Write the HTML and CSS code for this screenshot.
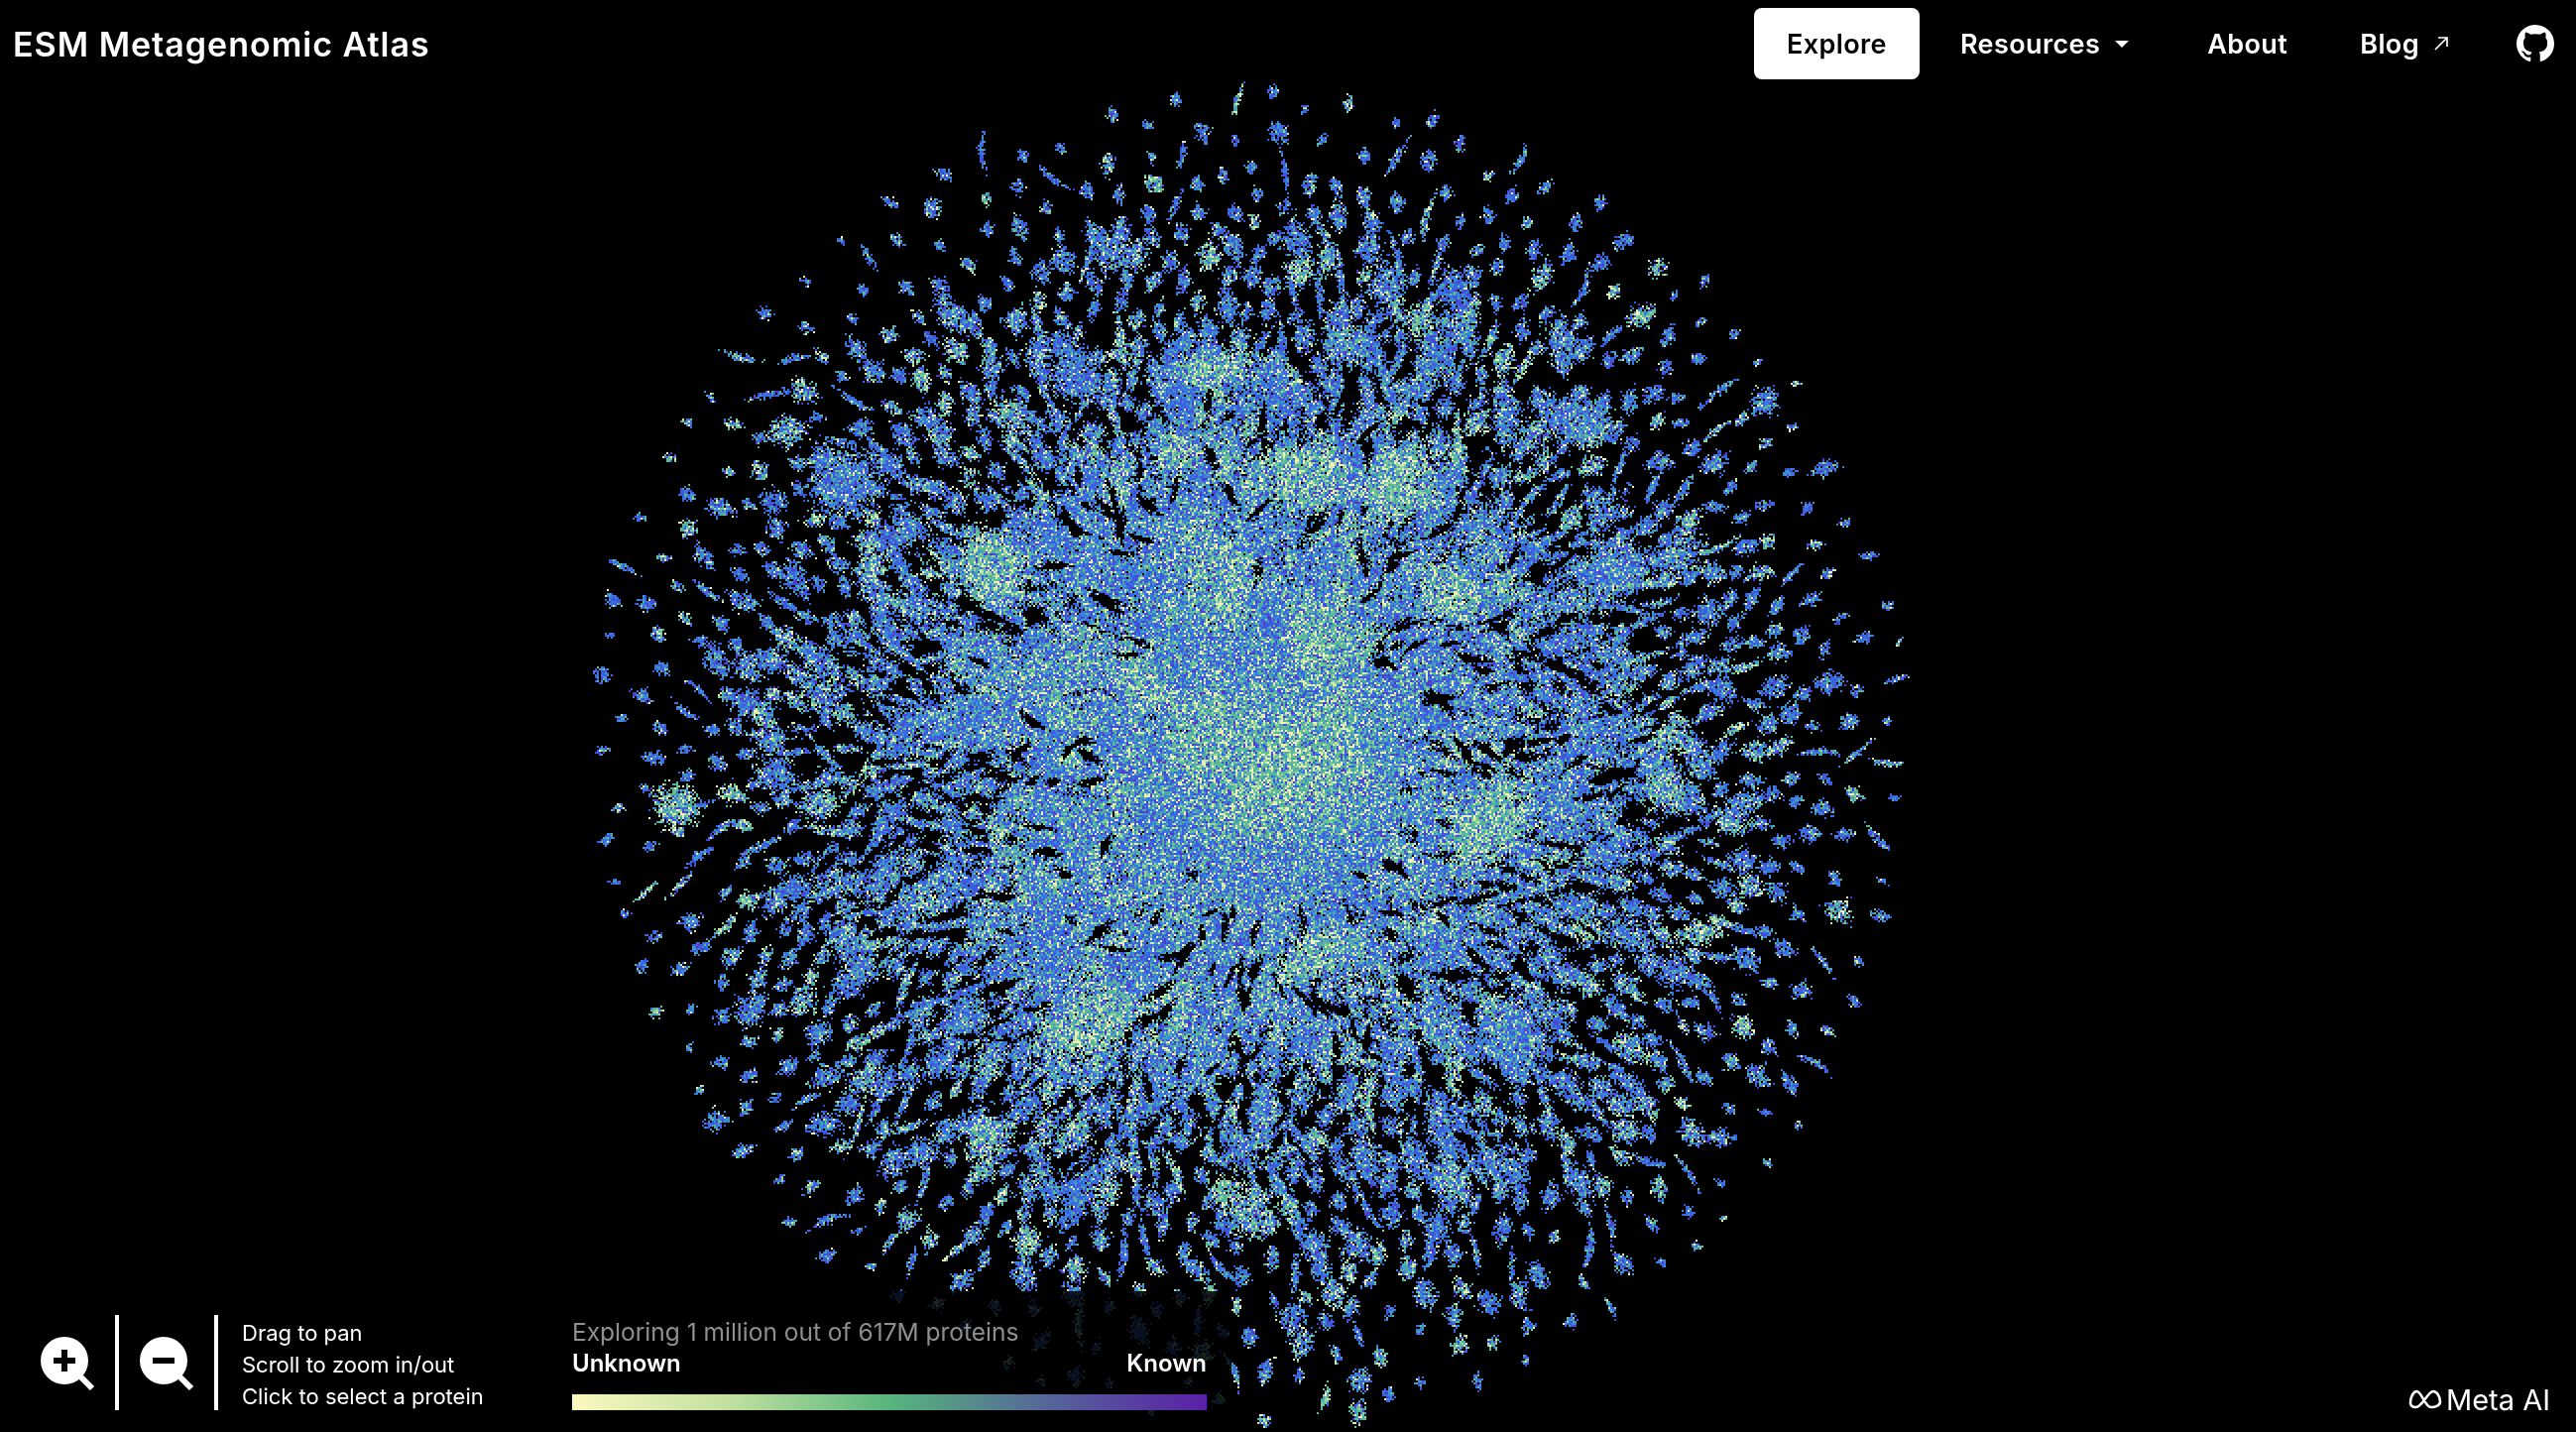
FILE: index.html
```html
<!DOCTYPE html>
<html lang="en">
<head>
    <meta charset="UTF-8">
    <meta name="viewport" content="width=device-width, initial-scale=1.0">
    <title>ESM Metagenomic Atlas</title>
    <link rel="stylesheet" href="styles.css">
</head>
<body>
    <canvas id="atlas" width="1299" height="722"></canvas>
    <div class="page">
        <header class="topbar">
            <div class="brand">ESM Metagenomic Atlas</div>
            <nav class="nav">
                <a class="nav-item explore">Explore</a>
                <a class="nav-item resources">Resources <span class="caret"></span></a>
                <a class="nav-item about">About</a>
                <a class="nav-item blog">Blog
                    <svg class="blog-arrow" viewBox="0 0 16 16" width="16" height="16">
                        <path d="M2 14 L14 2 M5 2 H14 V11" fill="none" stroke="#fff" stroke-width="1.7"/>
                    </svg>
                </a>
                <svg class="github" viewBox="0 0 16 16" width="38" height="38">
                    <path fill="#fff" d="M8 0C3.58 0 0 3.58 0 8c0 3.54 2.29 6.53 5.47 7.59.4.07.55-.17.55-.38 0-.19-.01-.82-.01-1.49-2.01.37-2.53-.49-2.69-.94-.09-.23-.48-.94-.82-1.13-.28-.15-.68-.52-.01-.53.63-.01 1.08.58 1.23.82.72 1.21 1.87.87 2.33.66.07-.52.28-.87.51-1.07-1.78-.2-3.64-.89-3.64-3.95 0-.87.31-1.59.82-2.15-.08-.2-.36-1.02.08-2.12 0 0 .67-.21 2.2.82.64-.18 1.32-.27 2-.27s1.36.09 2 .27c1.53-1.04 2.2-.82 2.2-.82.44 1.1.16 1.92.08 2.12.51.56.82 1.27.82 2.15 0 3.07-1.87 3.75-3.65 3.95.29.25.54.73.54 1.48 0 1.07-.01 1.93-.01 2.2 0 .21.15.46.55.38A8.01 8.01 0 0 0 16 8c0-4.42-3.58-8-8-8z"/>
                </svg>
            </nav>
        </header>

        <footer class="bottombar">
            <div class="zoom-tools">
                <svg class="zoom-icon" viewBox="0 0 64 64" width="64" height="64">
                    <circle cx="26" cy="26" r="24" fill="#fff"/>
                    <path d="M40 40 L54 54" stroke="#fff" stroke-width="6"/>
                    <path d="M15 26 H37 M26 15 V37" stroke="#000" stroke-width="6"/>
                </svg>
                <div class="divider"></div>
                <svg class="zoom-icon" viewBox="0 0 64 64" width="64" height="64">
                    <circle cx="26" cy="26" r="24" fill="#fff"/>
                    <path d="M40 40 L54 54" stroke="#fff" stroke-width="6"/>
                    <path d="M15 26 H37" stroke="#000" stroke-width="6"/>
                </svg>
                <div class="divider"></div>
            </div>
            <div class="hints">
                <div>Drag to pan</div>
                <div>Scroll to zoom in/out</div>
                <div>Click to select a protein</div>
            </div>
            <div class="legend">
                <div class="legend-title">Exploring 1 million out of 617M proteins</div>
                <div class="legend-labels"><span>Unknown</span><span>Known</span></div>
                <div class="legend-bar"></div>
            </div>
            <div class="meta-logo">
                <svg viewBox="0 0 34 20" width="34" height="20">
                    <path d="M2 13.5C2 8 5 2 8.5 2c4.5 0 8.5 16 14 16 5 0 9.500-2 9.500-5.500C32 7 28.500 2 25 2 19.500 2 14 18 7.500 18 4 18 2 16.500 2 13.500z" fill="none" stroke="#fff" stroke-width="2.600"/>
                </svg>
                <span>Meta AI</span>
            </div>
        </footer>
    </div>
    <script src="atlas.js"></script>
</body>
</html>
```

FILE: styles.css
```css
html, body {
    margin: 0;
    height: 100%;
    background-color: #000;
}

body {
    font-family: Inter, "Open Sans", sans-serif;
    color: #fff;
    overflow: hidden;
}

#atlas {
    position: absolute;
    left: 0;
    top: 0;
    width: 2598px;
    height: 1444px;
    image-rendering: pixelated;
}

.page {
    position: relative;
    height: 1444px;
    display: flex;
    flex-direction: column;
    justify-content: space-between;
}

.topbar {
    display: flex;
    justify-content: space-between;
    align-items: center;
    padding: 8px 22px 0 13px;
}

.brand {
    font-size: 34px;
    font-weight: 600;
    letter-spacing: 1px;
}

.nav {
    display: flex;
    align-items: center;
}

.nav-item {
    font-size: 27px;
    font-weight: 600;
    letter-spacing: 0.4px;
    display: flex;
    align-items: center;
}

.explore {
    width: 167px;
    height: 72px;
    justify-content: center;
    background-color: #fff;
    color: #000;
    border-radius: 8px;
    margin-right: 41px;
}

.caret {
    width: 0;
    height: 0;
    margin-left: 15px;
    border-left: 7px solid transparent;
    border-right: 7px solid transparent;
    border-top: 7px solid #fff;
}

.resources {
    margin-right: 79px;
}

.about {
    margin-right: 73px;
}

.blog {
    margin-right: 68px;
}

.blog-arrow {
    margin-left: 14px;
}

.bottombar {
    display: flex;
    align-items: flex-end;
    padding: 0 26px 22px 39px;
    position: relative;
}

.zoom-tools {
    display: flex;
    align-items: center;
    height: 96px;
}

.zoom-icon {
    margin: 8px 13px 0 19px;
}

.zoom-icon:first-child {
    margin-left: 0;
}

.divider {
    width: 4px;
    height: 96px;
    background-color: #fff;
}

.hints {
    margin: 0 0 -2px 24px;
    font-size: 22px;
    line-height: 32px;
    width: 333px;
}

.legend {
    width: 640px;
    position: relative;
}

/* dark panel that dims the points behind the legend */
.legend::before {
    content: "";
    position: absolute;
    left: -25px;
    right: -25px;
    top: -25px;
    bottom: -22px;
    background-color: rgba(0, 0, 0, 0.85);
}

.legend-title, .legend-labels, .legend-bar {
    position: relative;
}

.legend-title {
    font-size: 24.5px;
    line-height: 32px;
    color: #8f8f8f;
}

.legend-labels {
    display: flex;
    justify-content: space-between;
    font-size: 24px;
    font-weight: 600;
    line-height: 32px;
}

.legend-bar {
    height: 16px;
    margin-top: 15px;
    background: linear-gradient(to right, #fbf8c0, #c0e0a0 25%, #57b57d 50%, #55659a 75%, #5a1fa8);
}

.meta-logo {
    margin: 0 0 -3px auto;
    display: flex;
    align-items: center;
    gap: 4px;
    font-size: 29px;
    font-weight: 400;
    height: 28px;
}
```

FILE: atlas.js
```js
// point cloud of the atlas, seeded so every load looks the same
var canvas = document.getElementById('atlas');
var ctx = canvas.getContext('2d');
var W = canvas.width, H = canvas.height;
var CX = 631, CY = 381, R = 332;

var seed = 20221;
function rnd() {
    seed = (seed + 0x6D2B79F5) | 0;
    var t = Math.imul(seed ^ (seed >>> 15), 1 | seed);
    t = (t + Math.imul(t ^ (t >>> 7), 61 | t)) ^ t;
    return ((t ^ (t >>> 14)) >>> 0) / 4294967296;
}
function gauss() {
    return (rnd() + rnd() + rnd() + rnd() - 2) * 1.2;
}

var img = ctx.createImageData(W, H);
for (var i = 3; i < img.data.length; i += 4) img.data[i] = 255;

var BLUES = [[52, 92, 222], [60, 108, 226], [58, 128, 216], [66, 148, 204], [70, 84, 214]];
var TEALS = [[78, 168, 170], [90, 182, 150], [104, 192, 150]];
var LIGHTS = [[150, 210, 160], [214, 234, 176], [240, 244, 190]];
var PURPLE = [[78, 58, 196]];

function pick(list) {
    return list[Math.floor(rnd() * list.length)];
}

// k is how known a cluster is: 0 all blue, 1 mostly pale
function pointColor(k) {
    var v = rnd();
    if (v < 0.04 + 0.3 * k) return pick(LIGHTS);
    if (v < 0.12 + 0.64 * k) return pick(TEALS);
    if (v < 0.94) return pick(BLUES);
    return PURPLE[0];
}

function plot(x, y, c) {
    x = Math.round(x); y = Math.round(y);
    if (x < 0 || y < 0 || x >= W || y >= H) return;
    var o = (y * W + x) * 4;
    img.data[o] = c[0]; img.data[o + 1] = c[1]; img.data[o + 2] = c[2];
}

function blob(x, y, a, len, wid, k, n, color) {
    var ca = Math.cos(a), sa = Math.sin(a);
    var bend = (rnd() - 0.5) * 0.25 / Math.max(len, 1);
    for (var i = 0; i < n; i++) {
        var u = gauss() * len, v = gauss() * wid * (1 - Math.min(0.7, Math.abs(u) / (len * 3)));
        v += bend * u * u;
        plot(x + u * ca - v * sa, y + u * sa + v * ca, color || pointColor(k));
    }
}

function flow(x, y) {
    var base = Math.atan2(y - CY, x - CX);
    return base + 0.45 * Math.sin(x * 0.017 + 1.3) * Math.cos(y * 0.021 - 0.7);
}

// scattered flakes, small near the rim and large toward the middle
var placed = [];
var tries = 0;
while (placed.length < 3600 && tries < 80000) {
    tries++;
    var f = Math.pow(rnd(), 0.52);
    var th = rnd() * Math.PI * 2;
    var x = CX + Math.cos(th) * f * R, y = CY + Math.sin(th) * f * R * 1.01;
    var gap = f > 0.82 ? 7 + 30 * (f - 0.82) + 5 : 5 + 8 * f;
    var ok = true;
    for (var j = 0; j < placed.length; j++) {
        var ddx = placed[j][0] - x, ddy = placed[j][1] - y;
        if (ddx * ddx + ddy * ddy < gap * gap) { ok = false; break; }
    }
    if (!ok) continue;
    placed.push([x, y]);
    var inner = 1 - f;
    var len, wid;
    if (rnd() < 0.14) {
        // long thin streak
        len = 4 + rnd() * 3.5 + 6 * inner;
        wid = 1 + rnd() * 0.5 + 1.4 * inner;
    } else {
        len = (1.9 + 5.5 * Math.pow(inner, 0.7)) * (0.75 + rnd() * rnd() * 1.5);
        wid = len * (0.6 + rnd() * 0.4);
    }
    var kk = rnd() < 0.2 ? 0.55 + rnd() * 0.45 : rnd() * 0.3 + 0.3 * inner;
    var n = Math.round(len * wid * 9) + 6;
    blob(x, y, flow(x, y) + (rnd() - 0.5) * 1.2, len, wid, kk, n);
}

// black slits keep the mid ring from closing up
for (var s = 0; s < 340; s++) {
    var sf = 0.24 + rnd() * 0.46, st = rnd() * Math.PI * 2;
    var sx = CX + Math.cos(st) * sf * R, sy = CY + Math.sin(st) * sf * R;
    var sl = 2.5 + rnd() * 4, sw = 0.9 + rnd() * 1.1;
    blob(sx, sy, flow(sx, sy) + (rnd() - 0.5) * 1.6, sl, sw, 0, Math.round(sl * sw * 12), [0, 0, 0]);
}

// the middle is nearly solid, thinning out with no hard edge
for (var m = 0; m < 130; m++) {
    var mf = Math.pow(rnd(), 0.75) * 0.22, mt = rnd() * Math.PI * 2;
    var mx = CX + 18 + Math.cos(mt) * mf * R * 1.05, my = CY + 4 + Math.sin(mt) * mf * R * 0.85;
    blob(mx, my, rnd() * Math.PI, 8, 6, 0.42 + (0.22 - mf) * 2, 220);
}

// the big clusters that stand out, placed by hand [x, y, radius along, radius across, known]
var big = [
    [650, 388, 28, 22, 1], [668, 325, 14, 12, 1], [606, 370, 16, 14, 1],
    [501, 286, 13, 14, 1], [612, 288, 19, 15, 0.85], [654, 240, 11, 19, 1], [705, 244, 15, 14, 1],
    [731, 298, 11, 11, 1], [750, 415, 12, 21, 1], [547, 516, 18, 14, 1], [663, 480, 15, 10, 0.9],
    [538, 336, 19, 13, 0.6], [424, 242, 12, 13, 0.3], [612, 186, 13, 8, 0.85], [592, 227, 8, 7, 1],
    [530, 476, 21, 10, 0.3], [792, 211, 12, 10, 0.3], [816, 283, 9, 10, 0.4], [763, 523, 14, 12, 0.3],
    [733, 596, 8, 7, 0.6], [497, 572, 8, 8, 0.9], [838, 398, 8, 8, 0.7], [340, 406, 7, 9, 0.9]
];
big.forEach(function (b) {
    var n = Math.round(b[2] * b[3] * 11);
    blob(b[0], b[1], rnd() * Math.PI, b[2], b[3], b[4], n);
});

ctx.putImageData(img, 0, 0);
```
